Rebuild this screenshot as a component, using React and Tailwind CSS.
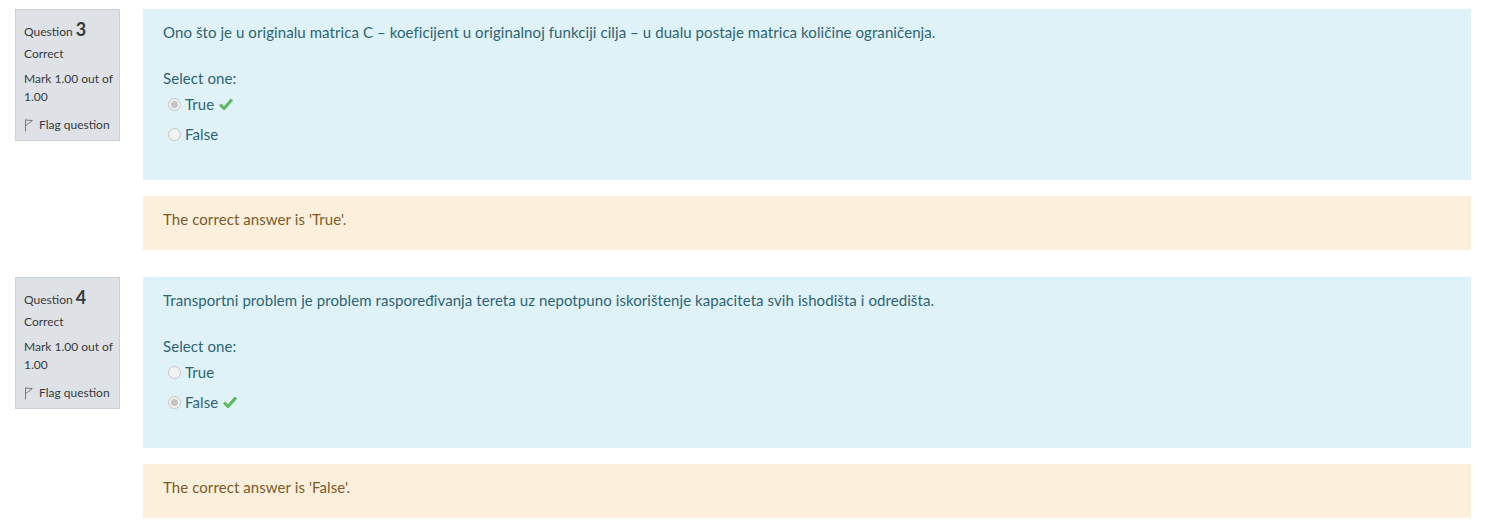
import React from "react";

const font = { fontFamily: "Lato, 'Open Sans', sans-serif" };

function Check() {
  return (
    <svg width="14" height="12" viewBox="0 0 14 12" className="ml-[5px]">
      <path d="M1 6.5 L5 10.5 L13 1.5" stroke="#5cb85c" strokeWidth="3" fill="none" strokeLinejoin="round" />
    </svg>
  );
}

function Radio({ checked }) {
  return (
    <span className="inline-flex items-center justify-center w-[13px] h-[13px] rounded-full border border-[#c4c4c4] bg-[#f2f2f2] mr-[4px]">
      {checked && <span className="w-[7px] h-[7px] rounded-full bg-[#c4c4c4]" />}
    </span>
  );
}

function Flag() {
  return (
    <svg width="10" height="13" viewBox="0 0 10 13" className="mr-[5px]">
      <path d="M1.5 0.5 V12.5 M1.5 1 L8.5 1.5 L4.5 4.5 L1.5 6.5" stroke="#7a7a7a" strokeWidth="1" fill="none" strokeLinejoin="round" />
    </svg>
  );
}

function Question({ n, text, correct, answer }) {
  return (
    <div className="flex mb-[27px]">
      <div className="w-[105px] shrink-0 self-start bg-[#dee2e6] border border-[#cad0d7] pl-[8px] pr-[3px] pt-[8px] pb-[6px] text-[12px] text-[#373a3c]">
        <div className="leading-[22px] h-[22px] mb-[5px]">
          Question <span className="text-[18px] font-bold">{n}</span>
        </div>
        <div className="leading-[18px] mb-[7px]">Correct</div>
        <div className="leading-[18px] mb-[10px]">Mark 1.00 out of 1.00</div>
        <div className="leading-[18px] flex items-center">
          <Flag />
          Flag question
        </div>
      </div>
      <div className="ml-[23px] flex-1 mr-[17px]">
        <div className="bg-[#def2f8] text-[#2f6473] text-[15px] tracking-[0.08px] pl-[20px] pt-[12px] pb-[31px]">
          <div className="leading-[22px]">{text}</div>
          <div className="leading-[22px] mt-[24px]">Select one:</div>
          {["True", "False"].map((o) => (
            <div key={o} className="h-[30px] flex items-center pl-[5px]">
              <Radio checked={o === correct} />
              <span className="leading-[22px]">{o}</span>
              {o === correct && <Check />}
            </div>
          ))}
        </div>
        <div className="mt-[16px] bg-[#fcefdc] text-[#7d5a29] text-[15px] tracking-[0.08px] pl-[20px] pt-[12px] h-[54px] leading-[22px]">
          {answer}
        </div>
      </div>
    </div>
  );
}

export default function App() {
  return (
    <div className="bg-white w-[1488px] h-[530px] pl-[15px] pt-[9px] overflow-hidden" style={font}>
      <Question
        n="3"
        text="Ono što je u originalu matrica C – koeficijent u originalnoj funkciji cilja – u dualu postaje matrica količine ograničenja."
        correct="True"
        answer="The correct answer is 'True'."
      />
      <Question
        n="4"
        text="Transportni problem je problem raspoređivanja tereta uz nepotpuno iskorištenje kapaciteta svih ishodišta i odredišta."
        correct="False"
        answer="The correct answer is 'False'."
      />
    </div>
  );
}
